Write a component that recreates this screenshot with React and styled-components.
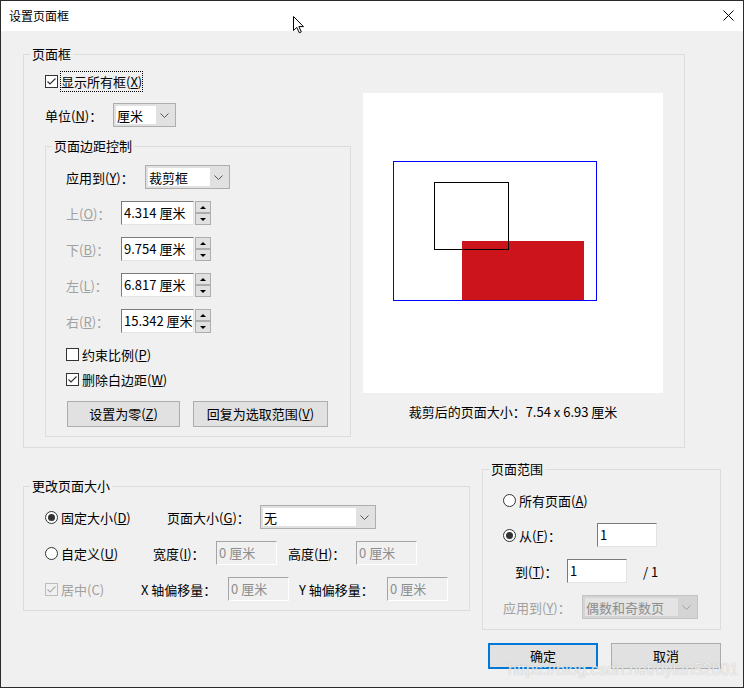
import React from 'react';
import styled, { createGlobalStyle } from 'styled-components';

const GlobalStyle = createGlobalStyle`
  html, body {
    margin: 0;
    padding: 0;
    background: #ffffff;
  }
  * {
    box-sizing: border-box;
  }
`;

const Dialog = styled.div`
  position: relative;
  width: 744px;
  height: 688px;
  border: 1px solid #2b2b2b;
  display: flex;
  flex-direction: column;
  font-family: "Noto Sans CJK SC", "Noto Sans", sans-serif;
  font-size: 13px;
  line-height: 17px;
  color: #000000;
  overflow: hidden;
`;

const TitleBar = styled.div`
  height: 30px;
  flex-shrink: 0;
  background: #ffffff;
  display: flex;
  align-items: center;
  justify-content: space-between;
  padding: 0 9px 2px 8px;
  font-size: 12px;
`;

const Body = styled.div`
  flex: 1;
  background: #f0f0f0;
  padding: 15px 0 0 22px;
  display: flex;
  flex-direction: column;
  align-items: flex-start;
`;

const GroupBox = styled.fieldset`
  margin: ${p => p.$mt || 0}px 0 0 0;
  padding: 0;
  border: 1px solid #dcdcdc;
  width: ${p => p.$w}px;
  height: ${p => p.$h}px;
  min-width: 0;
  flex-shrink: 0;
`;

const GroupTitle = styled.legend`
  margin-left: 6px;
  padding: 0 2px;
  font-size: 13px;
  line-height: 16px;
`;

const GroupBody = styled.div`
  display: flex;
  flex-direction: column;
  align-items: flex-start;
  padding-left: ${p => p.$pl || 0}px;
`;

const FrameContent = styled.div`
  display: flex;
`;

const LeftColumn = styled.div`
  width: 339px;
  padding-left: 21px;
  display: flex;
  flex-direction: column;
  align-items: flex-start;
`;

const PreviewColumn = styled.div`
  width: 300px;
  padding-top: 31px;
  display: flex;
  flex-direction: column;
  align-items: center;
`;

const PreviewBox = styled.div`
  width: 300px;
  height: 300px;
  background: #ffffff;
`;

const Caption = styled.div`
  margin-top: 10px;
  white-space: nowrap;
`;

const Row = styled.div`
  display: flex;
  align-items: center;
  height: ${p => p.$h || 24}px;
  margin-top: ${p => p.$mt || 0}px;
`;

const Label = styled.span`
  flex-shrink: 0;
  width: ${p => (p.$w ? `${p.$w}px` : 'auto')};
  margin-left: ${p => p.$ml || 0}px;
  color: ${p => (p.$disabled ? '#a0a0a0' : '#000000')};
  white-space: nowrap;
`;

const Option = styled.label`
  flex-shrink: 0;
  display: flex;
  align-items: center;
  gap: 3px;
  width: ${p => (p.$w ? `${p.$w}px` : 'auto')};
  color: ${p => (p.$disabled ? '#a0a0a0' : '#000000')};
  white-space: nowrap;
`;

const FocusText = styled.span`
  margin-left: -1px;
  border: 1px dotted #000000;
  line-height: 14px;
  padding: 0;
  white-space: nowrap;
`;

const Box = styled.span`
  width: 13px;
  height: 13px;
  flex-shrink: 0;
  border: 1px solid ${p => (p.$disabled ? '#bcbcbc' : '#333333')};
  background: ${p => (p.$disabled ? '#f0f0f0' : '#ffffff')};
  display: flex;
  align-items: center;
  justify-content: center;
`;

const Radio = styled.span`
  width: 13px;
  height: 13px;
  flex-shrink: 0;
  border-radius: 50%;
  border: 1px solid #333333;
  background: #ffffff;
  display: flex;
  align-items: center;
  justify-content: center;

  &::after {
    content: '';
    width: 7px;
    height: 7px;
    border-radius: 50%;
    background: #333333;
    display: ${p => (p.$checked ? 'block' : 'none')};
  }
`;

const TextInput = styled.input`
  flex-shrink: 0;
  width: ${p => p.$w}px;
  height: 24px;
  margin: 0;
  padding: 0 0 1px 2px;
  border: 1px solid;
  border-color: ${p => (p.disabled ? '#a5a5a5 #ffffff #ffffff #a5a5a5' : '#7a7a7a #e3e3e3 #e3e3e3 #7a7a7a')};
  background: ${p => (p.disabled ? '#f0f0f0' : '#ffffff')};
  color: ${p => (p.disabled ? '#8d8d8d' : '#000000')};
  font: inherit;
  outline: none;
`;

const ComboFrame = styled.div`
  flex-shrink: 0;
  width: ${p => p.$w}px;
  height: 24px;
  padding: 2px;
  display: flex;
  border: 1px solid ${p => (p.$disabled ? '#c3c3c3' : '#adadad')};
  background: ${p => (p.$disabled ? '#d4d4d4' : '#e1e1e1')};
`;

const ComboValue = styled.span`
  flex: 1;
  display: flex;
  align-items: center;
  padding-left: 1px;
  background: ${p => (p.$disabled ? '#e4e4e4' : '#ffffff')};
  color: ${p => (p.$disabled ? '#8d8d8d' : '#000000')};
  white-space: nowrap;
`;

const ComboArrow = styled.span`
  width: 17px;
  display: flex;
  align-items: center;
  justify-content: center;
`;

const Spinner = styled.div`
  display: flex;
  flex-direction: column;
  margin-left: 1px;
`;

const SpinButton = styled.span`
  width: 16px;
  height: 12px;
  border: 1px solid #adadad;
  background: #e1e1e1;
  display: flex;
  align-items: center;
  justify-content: center;

  &::after {
    content: '';
    border-left: 3px solid transparent;
    border-right: 3px solid transparent;
    ${p => (p.$down ? 'border-top: 3px solid #000000;' : 'border-bottom: 3px solid #000000;')}
  }
`;

const PushButton = styled.button`
  flex-shrink: 0;
  width: ${p => p.$w}px;
  height: 26px;
  margin: 0 0 0 ${p => p.$ml || 0}px;
  padding: 0 0 1px;
  border: ${p => (p.$default ? '2px solid #0078d7' : '1px solid #adadad')};
  background: #e1e1e1;
  color: #000000;
  font: inherit;
`;

const BottomArea = styled.div`
  display: flex;
  align-items: flex-start;
  gap: 12px;
`;

const RightColumn = styled.div`
  display: flex;
  flex-direction: column;
  margin-top: 13px;
`;

const ButtonBar = styled.div`
  display: flex;
  justify-content: flex-end;
  gap: 13px;
  margin-top: 13px;
`;

const Watermark = styled.span`
  position: absolute;
  left: 507px;
  top: 661px;
  font-family: "Liberation Sans", Arial, sans-serif;
  font-size: 16px;
  line-height: 16px;
  color: rgba(255, 255, 255, 0.75);
  text-shadow: 0 0 1px rgba(120, 120, 120, 0.55);
  white-space: nowrap;
  pointer-events: none;
`;

const Cursor = styled.svg`
  position: absolute;
  left: 291px;
  top: 14px;
`;

const CheckBox = ({ checked, disabled }) => (
  <Box $disabled={disabled}>
    {checked && (
      <svg width="11" height="11" viewBox="0 0 11 11">
        <polyline
          points="1.5,5.5 4,8 9.5,2.5"
          fill="none"
          stroke={disabled ? '#b0b0b0' : '#333333'}
          strokeWidth="1.2"
        />
      </svg>
    )}
  </Box>
);

const Combo = ({ w, value, disabled }) => (
  <ComboFrame $w={w} $disabled={disabled}>
    <ComboValue $disabled={disabled}>{value}</ComboValue>
    <ComboArrow>
      <svg width="9" height="5" viewBox="0 0 9 5">
        <polyline points="0.5,0.5 4.5,4.5 8.5,0.5" fill="none" stroke={disabled ? '#a0a0a0' : '#555555'} strokeWidth="1" />
      </svg>
    </ComboArrow>
  </ComboFrame>
);

const SpinField = ({ label, value }) => (
  <Row $mt={12}>
    <Label $w={55} $disabled>{label}</Label>
    <TextInput $w={73} defaultValue={value} readOnly />
    <Spinner>
      <SpinButton />
      <SpinButton $down />
    </Spinner>
  </Row>
);

const App = () => {
  const margins = [
    { label: <>上(<u>O</u>)：</>, value: '4.314 厘米' },
    { label: <>下(<u>B</u>)：</>, value: '9.754 厘米' },
    { label: <>左(<u>L</u>)：</>, value: '6.817 厘米' },
    { label: <>右(<u>R</u>)：</>, value: '15.342 厘米' },
  ];

  return (
    <>
      <GlobalStyle />
      <Dialog>
        <TitleBar>
          <span>设置页面框</span>
          <svg width="11" height="11" viewBox="0 0 11 11">
            <path d="M0.5 0.5 L10.5 10.5 M10.5 0.5 L0.5 10.5" stroke="#000000" strokeWidth="1" />
          </svg>
        </TitleBar>

        <Body>
          <GroupBox $w={662} $h={402}>
            <GroupTitle>页面框</GroupTitle>
            <FrameContent>
              <LeftColumn>
                <Row $h={16} $mt={11}>
                  <CheckBox checked />
                  <Label $ml={3}>
                    <FocusText>显示所有框(<u>X</u>)</FocusText>
                  </Label>
                </Row>
                <Row $mt={14}>
                  <Label $w={68}>单位(<u>N</u>)：</Label>
                  <Combo w={63} value="厘米" />
                </Row>

                <GroupBox $w={306} $h={299} $mt={11}>
                  <GroupTitle>页面边距控制</GroupTitle>
                  <GroupBody $pl={20}>
                    <Row $mt={11}>
                      <Label $w={79}>应用到(<u>Y</u>)：</Label>
                      <Combo w={85} value="裁剪框" />
                    </Row>
                    {margins.map((m, i) => (
                      <SpinField key={i} label={m.label} value={m.value} />
                    ))}
                    <Row $h={17} $mt={13}>
                      <Option>
                        <CheckBox />
                        <span>约束比例(<u>P</u>)</span>
                      </Option>
                    </Row>
                    <Row $h={17} $mt={8}>
                      <Option>
                        <CheckBox checked />
                        <span>删除白边距(<u>W</u>)</span>
                      </Option>
                    </Row>
                    <Row $h={26} $mt={13}>
                      <PushButton $w={113} $ml={1}>设置为零(<u>Z</u>)</PushButton>
                      <PushButton $w={135} $ml={13}>回复为选取范围(<u>V</u>)</PushButton>
                    </Row>
                  </GroupBody>
                </GroupBox>
              </LeftColumn>

              <PreviewColumn>
                <PreviewBox>
                  <svg width="300" height="300" viewBox="0 0 300 300">
                    <rect x="99" y="148" width="122" height="59" fill="#cc141c" />
                    <rect x="71.5" y="89.5" width="74" height="67" fill="none" stroke="#000000" strokeWidth="1" />
                    <rect x="30.5" y="68.5" width="203" height="139" fill="none" stroke="#0000ff" strokeWidth="1" />
                  </svg>
                </PreviewBox>
                <Caption>裁剪后的页面大小：7.54 x 6.93 厘米</Caption>
              </PreviewColumn>
            </FrameContent>
          </GroupBox>

          <BottomArea>
            <GroupBox $w={447} $h={133} $mt={30}>
              <GroupTitle>更改页面大小</GroupTitle>
              <GroupBody $pl={21}>
                <Row $mt={11}>
                  <Option $w={122}>
                    <Radio $checked />
                    <span>固定大小(<u>D</u>)</span>
                  </Option>
                  <Label $w={93}>页面大小(<u>G</u>)：</Label>
                  <Combo w={116} value="无" />
                </Row>
                <Row $mt={12}>
                  <Option $w={108}>
                    <Radio />
                    <span>自定义(<u>U</u>)</span>
                  </Option>
                  <Label $w={63}>宽度(<u>I</u>)：</Label>
                  <TextInput $w={61} defaultValue="0 厘米" disabled />
                  <Label $w={68} $ml={11}>高度(<u>H</u>)：</Label>
                  <TextInput $w={61} defaultValue="0 厘米" disabled />
                </Row>
                <Row $mt={12}>
                  <Option $w={96} $disabled>
                    <CheckBox checked disabled />
                    <span>居中(C)</span>
                  </Option>
                  <Label $w={87}>X 轴偏移量：</Label>
                  <TextInput $w={61} defaultValue="0 厘米" disabled />
                  <Label $w={88} $ml={10}>Y 轴偏移量：</Label>
                  <TextInput $w={61} defaultValue="0 厘米" disabled />
                </Row>
              </GroupBody>
            </GroupBox>

            <RightColumn>
              <GroupBox $w={239} $h={169}>
                <GroupTitle>页面范围</GroupTitle>
                <GroupBody $pl={20}>
                  <Row $h={17} $mt={15}>
                    <Option>
                      <Radio />
                      <span>所有页面(<u>A</u>)</span>
                    </Option>
                  </Row>
                  <Row $mt={14}>
                    <Option $w={94}>
                      <Radio $checked />
                      <span>从(<u>F</u>)：</span>
                    </Option>
                    <TextInput $w={60} defaultValue="1" readOnly />
                  </Row>
                  <Row $mt={12}>
                    <Label $w={52} $ml={12}>到(<u>T</u>)：</Label>
                    <TextInput $w={60} defaultValue="1" readOnly />
                    <Label $ml={16}>/ 1</Label>
                  </Row>
                  <Row $mt={12}>
                    <Label $w={79} $disabled>应用到(<u>Y</u>)：</Label>
                    <Combo w={116} value="偶数和奇数页" disabled />
                  </Row>
                </GroupBody>
              </GroupBox>
              <ButtonBar>
                <PushButton $w={110} $default>确定</PushButton>
                <PushButton $w={110}>取消</PushButton>
              </ButtonBar>
            </RightColumn>
          </BottomArea>
        </Body>

        <Cursor width="13" height="20" viewBox="0 0 13 20">
          <path
            d="M1.5 1.5 L1.5 15.5 L4.8 12.4 L7.3 17.8 L9.3 16.9 L6.9 11.6 L11.5 11.6 Z"
            fill="#ffffff"
            stroke="#000000"
            strokeWidth="1"
            strokeLinejoin="miter"
          />
        </Cursor>
        <Watermark>https://blog.csdn.net/dylan52001</Watermark>
      </Dialog>
    </>
  );
};

export default App;
